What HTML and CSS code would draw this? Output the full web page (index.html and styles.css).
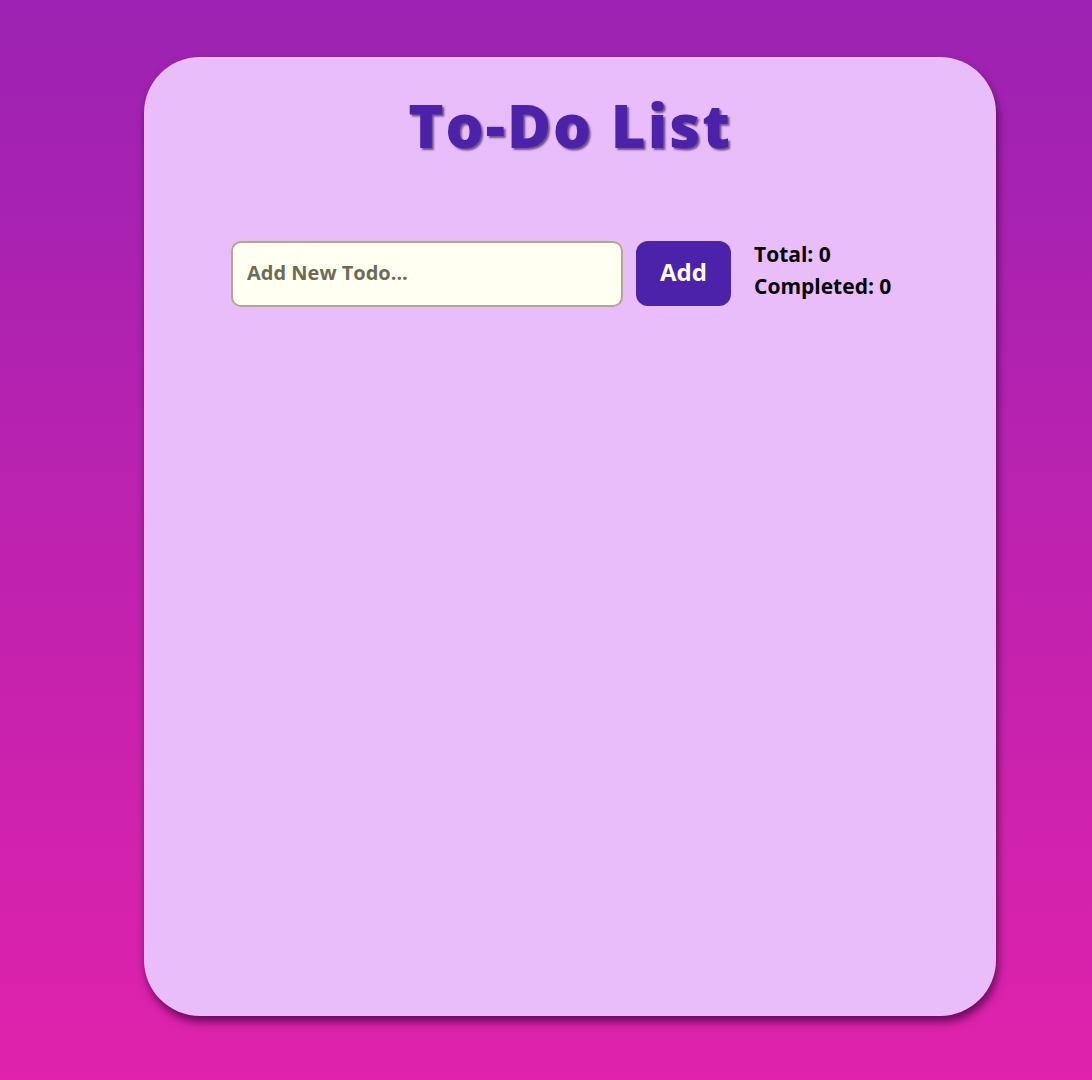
FILE: index.html
```html
<!DOCTYPE html>
<html lang="en">
<head>
<meta charset="utf-8">
<title>To-Do List</title>
<link rel="stylesheet" href="styles.css">
</head>
<body>
<main class="card">
  <h1 class="title">To-Do List</h1>
  <div class="controls">
    <input class="todo-input" type="text" placeholder="Add New Todo...">
    <button class="add-btn" type="button">Add</button>
    <div class="stats">
      <div>Total: 0</div>
      <div>Completed: 0</div>
    </div>
  </div>
</main>
</body>
</html>
```
FILE: styles.css
```css
* { box-sizing: border-box; }
html, body { height: 100%; }
body {
  margin: 0;
  min-height: 1080px;
  background: linear-gradient(to bottom, #9b22b2 0%, #e022ac 100%);
  font-family: "Open Sans", "Noto Sans", sans-serif;
  padding-top: 57px;
}
.card {
  width: 852px;
  height: 959px;
  margin-left: 144px;
  background: #e9bdfa;
  border-radius: 56px;
  box-shadow: 2px 6px 8px rgba(60, 0, 60, 0.7);
  padding-top: 28px;
}
.title {
  margin: 0;
  text-align: center;
  font-size: 60px;
  font-weight: 800;
  color: #4b22a9;
  letter-spacing: 2px;
  text-shadow: 2px 2px 2px rgba(30, 10, 60, 0.6);
  line-height: 80px;
}
.controls {
  display: flex;
  align-items: flex-start;
  margin-top: 76px;
  padding-left: 87px;
}
.todo-input {
  width: 392px;
  height: 66px;
  border: 2px solid #b4a88c;
  border-radius: 10px;
  background: #fffff2;
  padding: 0 14px 3px;
  font-family: inherit;
  font-size: 20px;
  font-weight: 700;
  color: #333;
  outline: none;
}
.todo-input::placeholder { color: #6c6c56; }
.add-btn {
  margin-left: 13px;
  width: 95px;
  height: 65px;
  border: none;
  border-radius: 12px;
  background: #4b22a9;
  color: #fff;
  font-family: inherit;
  font-size: 24px;
  font-weight: 700;
  padding: 0 0 4px;
}
.stats {
  margin-left: 23px;
  margin-top: -3px;
  font-size: 21px;
  font-weight: 700;
  color: #000;
  line-height: 32px;
}
```
